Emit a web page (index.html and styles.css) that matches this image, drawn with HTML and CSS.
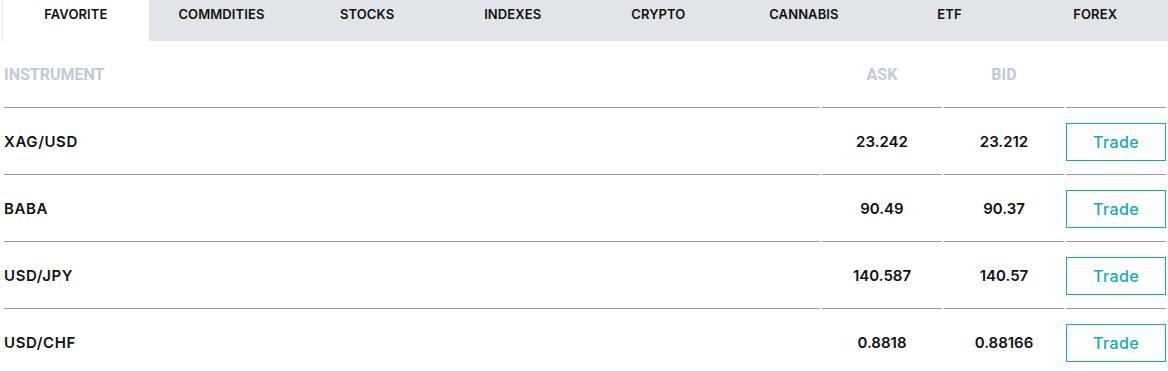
FILE: index.html
```html
<!DOCTYPE html>
<html lang="en">
<head>
<meta charset="utf-8">
<title>Instruments</title>
<link rel="stylesheet" href="styles.css">
</head>
<body>
<div class="wrap">
  <nav class="tabs">
    <div class="tab active">FAVORITE</div>
    <div class="tab">COMMDITIES</div>
    <div class="tab">STOCKS</div>
    <div class="tab">INDEXES</div>
    <div class="tab">CRYPTO</div>
    <div class="tab">CANNABIS</div>
    <div class="tab">ETF</div>
    <div class="tab">FOREX</div>
  </nav>
  <table class="quotes">
    <colgroup>
      <col class="c-name"><col class="c-ask"><col class="c-bid"><col class="c-act">
    </colgroup>
    <thead>
      <tr><th class="name">INSTRUMENT</th><th>ASK</th><th>BID</th><th></th></tr>
    </thead>
    <tbody>
      <tr><td class="name">XAG/USD</td><td>23.242</td><td>23.212</td><td><button class="trade">Trade</button></td></tr>
      <tr><td class="name">BABA</td><td>90.49</td><td>90.37</td><td><button class="trade">Trade</button></td></tr>
      <tr><td class="name">USD/JPY</td><td>140.587</td><td>140.57</td><td><button class="trade">Trade</button></td></tr>
      <tr><td class="name">USD/CHF</td><td>0.8818</td><td>0.88166</td><td><button class="trade">Trade</button></td></tr>
    </tbody>
  </table>
</div>
</body>
</html>
```
FILE: styles.css
```css
html, body {
  margin: 0;
  padding: 0;
  background: #ffffff;
}
.wrap {
  padding-left: 2px;
  font-family: Inter, "Open Sans", sans-serif;
  color: #111111;
}
.tabs {
  display: flex;
  height: 41px;
  background: #e1e4e9;
  border-left: 1px solid #e3e3ec;
}
.tab {
  flex: 1 1 0;
  text-align: center;
  font-size: 13px;
  font-weight: 600;
  line-height: 18px;
  padding-top: 5px;
  color: #111111;
  letter-spacing: 0.1px;
}
.tab.active {
  background: #ffffff;
}
.quotes {
  width: 1166px;
  border-collapse: separate;
  border-spacing: 2px 0;
  table-layout: fixed;
}
.c-name { width: 816px; }
.c-ask { width: 120px; }
.c-bid { width: 120px; }
.c-act { width: 100px; }
.quotes th {
  height: 66px;
  padding: 0;
  font-family: Roboto, sans-serif;
  font-weight: 700;
  font-size: 16px;
  color: #c2cad7;
  text-align: center;
  vertical-align: middle;
  border-bottom: 1px solid #9a9a9a;
}
.quotes td {
  height: 66px;
  padding: 0;
  font-size: 15px;
  font-weight: 600;
  text-align: center;
  vertical-align: middle;
  border-bottom: 1px solid #9a9a9a;
}
.quotes .name {
  text-align: left;
}
.quotes td.name {
  letter-spacing: 0.6px;
}
.trade {
  display: block;
  width: 100px;
  height: 38px;
  margin: 0;
  margin-top: 1px;
  padding: 0;
  background: #ffffff;
  border: 1px solid #17a9b6;
  color: #17a9b6;
  font-family: Inter, sans-serif;
  font-size: 16px;
  font-weight: 500;
  letter-spacing: 0.4px;
}
```
